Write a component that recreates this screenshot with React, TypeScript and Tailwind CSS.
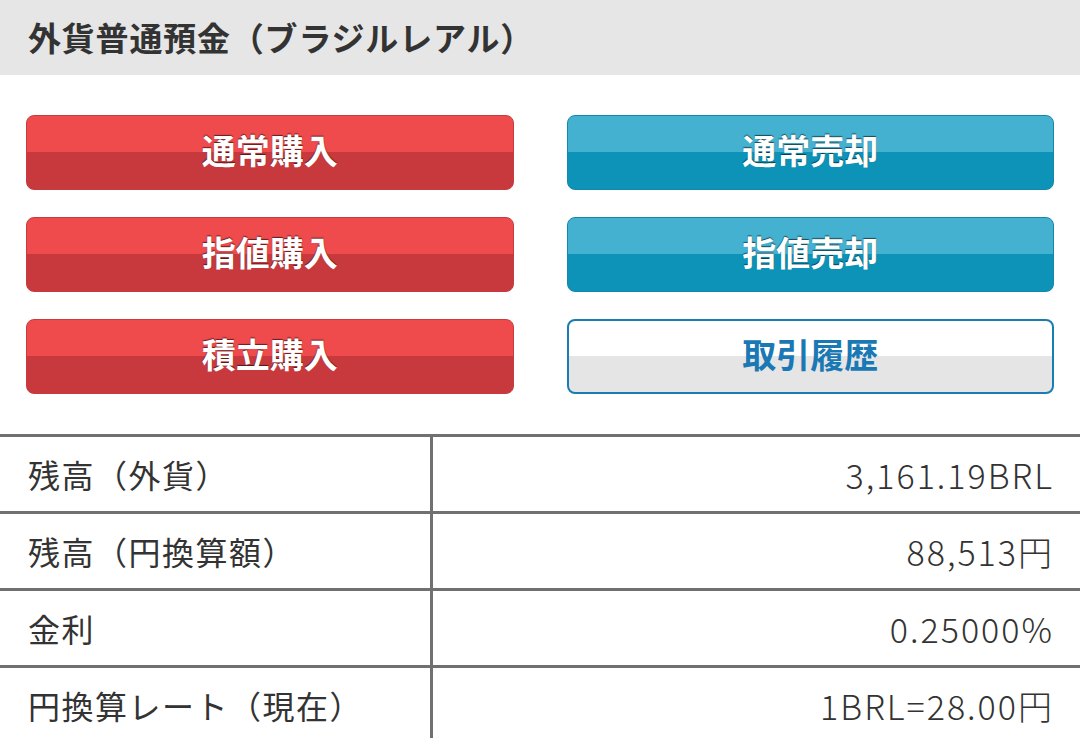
import React from 'react';

const font = { fontFamily: '"Noto Sans CJK JP", "Noto Sans", sans-serif' };

type Btn = { label: string; kind: 'red' | 'blue' | 'white' };

const buttons: Btn[] = [
  { label: '通常購入', kind: 'red' },
  { label: '通常売却', kind: 'blue' },
  { label: '指値購入', kind: 'red' },
  { label: '指値売却', kind: 'blue' },
  { label: '積立購入', kind: 'red' },
  { label: '取引履歴', kind: 'white' },
];

const rows = [
  ['残高（外貨）', '3,161.19BRL'],
  ['残高（円換算額）', '88,513円'],
  ['金利', '0.25000%'],
  ['円換算レート（現在）', '1BRL=28.00円'],
];

const ActionButton = ({ label, kind }: Btn) => {
  const skin =
    kind === 'red'
      ? 'border-[#c73a3e] bg-[linear-gradient(#ef4a4c_0%,#ef4a4c_49%,#c8393d_49%,#c8393d_100%)] text-white [text-shadow:0_-1px_1px_rgba(0,0,0,0.6)]'
      : kind === 'blue'
      ? 'border-[#1388ae] bg-[linear-gradient(#44b1d1_0%,#44b1d1_49%,#0d93b8_49%,#0d93b8_100%)] text-white [text-shadow:0_-1px_1px_rgba(0,0,0,0.6)]'
      : 'border-2 border-[#1a7db2] bg-[linear-gradient(#ffffff_0%,#ffffff_49%,#e5e5e5_49%,#e5e5e5_100%)] text-[#1a78b4]';
  return (
    <button
      className={`h-[75px] rounded-[8px] border text-[34px] leading-none font-bold flex items-center justify-center pb-[5px] ${skin}`}
    >
      {label}
    </button>
  );
};

export default function App() {
  return (
    <div className="w-[1080px] h-[738px] overflow-hidden bg-white text-[#333]" style={font}>
      <div className="h-[75px] bg-[#e6e6e6] flex items-center px-[28px]">
        <h1 className="text-[33px] leading-none font-bold text-[#333] tracking-[0.8px]">外貨普通預金（ブラジルレアル）</h1>
      </div>

      <div className="grid grid-cols-2 gap-x-[53px] gap-y-[27px] px-[26px] pt-[40px]">
        {buttons.map(b => (
          <ActionButton key={b.label} {...b} />
        ))}
      </div>

      <div className="mt-[40px] border-t-[3px] border-[#707070]">
        {rows.map(([k, v]) => (
          <div key={k} className="flex h-[77px] border-b-[3px] border-[#707070]">
            <div className="w-[433px] border-r-[3px] border-[#707070] flex items-center pl-[28px] text-[32px] tracking-[1.5px] text-[#333]">
              {k}
            </div>
            <div className="flex-1 flex items-center justify-end pr-[26px] text-[34px] tracking-[2px] font-light text-[#333]">
              {v}
            </div>
          </div>
        ))}
      </div>
    </div>
  );
}
